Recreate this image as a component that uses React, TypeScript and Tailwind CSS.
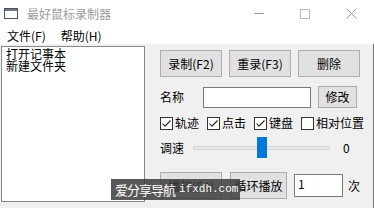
import React from 'react'

const FONT = { fontFamily: '"Noto Sans CJK SC", "Liberation Sans", sans-serif' }

function Btn({ label, className = '' }: { label: string; className?: string }) {
  return (
    <div
      className={`flex items-center justify-center bg-[#e1e1e1] border border-[#adadad] text-[12px] text-black ${className}`}
    >
      {label}
    </div>
  )
}

function Check({ label, checked, className = '' }: { label: string; checked: boolean; className?: string }) {
  return (
    <div className={`flex items-center gap-[2px] ${className}`}>
      <div className="w-[13px] h-[13px] bg-white border border-[#333] flex items-center justify-center">
        {checked && (
          <svg width="11" height="11" viewBox="0 0 11 11">
            <path d="M1.5 5.5 L4 8.2 L9.5 2.5" stroke="#222" strokeWidth="1.1" fill="none" />
          </svg>
        )}
      </div>
      <span className="text-[12px] leading-none text-black">{label}</span>
    </div>
  )
}

export default function App() {
  return (
    <div className="relative w-[374px] h-[208px] overflow-hidden bg-white flex flex-col" style={FONT}>
      {/* Title bar */}
      <div className="h-[27px] flex items-center shrink-0">
        <svg width="14" height="11" viewBox="0 0 14 11" className="ml-[4px]">
          <rect x="0.5" y="0.5" width="13" height="10" fill="white" stroke="#555" />
          <rect x="1" y="1" width="12" height="2" fill="#6b7888" />
        </svg>
        <span className="ml-[9px] text-[12px] text-[#9a9a9a] leading-none">最好鼠标录制器</span>
        <div className="ml-auto flex items-center h-full">
          <div className="w-[46px] h-full flex items-center justify-center">
            <div className="w-[10px] h-px bg-[#999]" />
          </div>
          <div className="w-[46px] h-full flex items-center justify-center">
            <div className="w-[10px] h-[10px] border border-[#bbb]" />
          </div>
          <div className="w-[46px] h-full flex items-center justify-center">
            <svg width="11" height="11" viewBox="0 0 11 11">
              <path d="M0.5 0.5 L10.5 10.5 M10.5 0.5 L0.5 10.5" stroke="#999" strokeWidth="1" />
            </svg>
          </div>
        </div>
      </div>

      {/* Menu bar */}
      <div className="h-[17px] flex items-center shrink-0 text-[12px] text-black">
        <span className="ml-[7px]">文件(F)</span>
        <span className="ml-[15px]">帮助(H)</span>
      </div>

      {/* Body */}
      <div className="flex-1 bg-[#f0f0f0] flex border-r border-[#777]">
        <div className="mt-[2px] ml-[1px] w-[144px] h-[156px] bg-white border border-[#828790] px-[4px] pt-[1px] text-[12px] leading-[12px] text-black">
          <div className="h-[12px]">打开记事本</div>
          <div className="h-[12px]">新建文件夹</div>
        </div>

        <div className="ml-[15px] pt-[6px] flex flex-col">
          <div className="flex gap-[7px]">
            <Btn label="录制(F2)" className="w-[62px] h-[27px]" />
            <Btn label="重录(F3)" className="w-[62px] h-[27px]" />
            <Btn label="删除" className="w-[62px] h-[27px]" />
          </div>

          <div className="mt-[9px] flex items-center h-[22px]">
            <span className="text-[12px] text-black w-[43px]">名称</span>
            <div className="w-[108px] h-[21px] bg-white border border-[#7a7a7a]" />
            <Btn label="修改" className="ml-[7px] w-[39px] h-[22px]" />
          </div>

          <div className="mt-[7px] flex items-center h-[16px]">
            <Check label="轨迹" checked />
            <Check label="点击" checked className="ml-[8px]" />
            <Check label="键盘" checked className="ml-[8px]" />
            <Check label="相对位置" checked={false} className="ml-[8px]" />
          </div>

          <div className="mt-[6px] flex items-center h-[21px]">
            <span className="text-[12px] text-black w-[33px]">调速</span>
            <div className="relative w-[137px] h-[21px] flex items-center">
              <div className="w-full h-[4px] bg-[#e7eaea] border border-[#d6d6d6]" />
              <div className="absolute left-[64px] top-0 w-[10px] h-[21px] bg-[#0078d7]" />
            </div>
            <span className="ml-[13px] text-[12px] text-black">0</span>
          </div>

          <div className="mt-[14px] flex items-center">
            <Btn label="播放(F4)" className="w-[62px] h-[27px]" />
            <Btn label="循环播放" className="ml-[8px] w-[57px] h-[27px]" />
            <div className="ml-[7px] w-[49px] h-[23px] bg-white border border-[#7a7a7a] text-[12px] leading-[18px] pl-[3px] text-black">
              1
            </div>
            <span className="ml-[5px] text-[12px] text-black">次</span>
          </div>
        </div>
      </div>

      {/* Watermark overlay */}
      <div className="absolute left-[111px] top-[179px] w-[129px] h-[21px] bg-[rgba(60,60,60,0.85)] flex items-center pl-[4px] gap-[4px]">
        <span className="text-[13px] leading-none text-white tracking-[-1px]">爱分享导航</span>
        <span className="text-[11px] leading-none text-white" style={{ fontFamily: '"Liberation Mono", monospace' }}>
          ifxdh.com
        </span>
      </div>
    </div>
  )
}
